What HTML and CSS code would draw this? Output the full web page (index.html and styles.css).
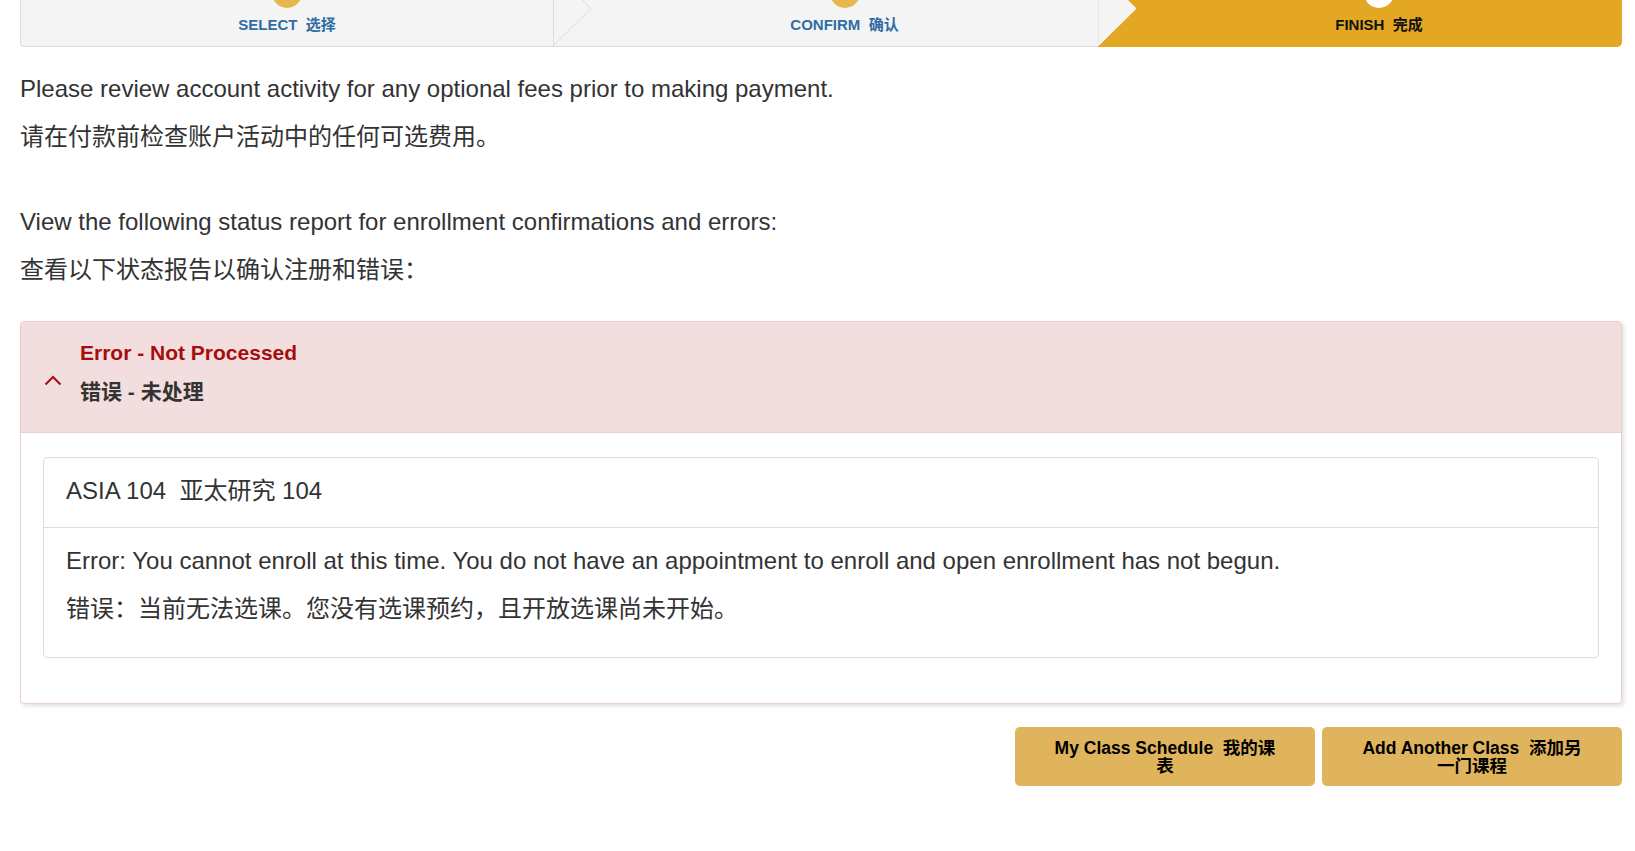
FILE: index.html
```html
<!DOCTYPE html>
<html lang="zh-CN">

<head>
    <meta charset="UTF-8">
    <meta name="viewport" content="width=device-width, initial-scale=1.0">
    <title>Enrollment Status</title>
    <link rel="stylesheet" href="styles.css">
</head>

<body>
    <div class="page">
        <!-- steps: select / confirm / finish -->
        <div class="stepper">
            <div class="step step-select">
                <span class="step-dot"></span>
                <span class="step-label">SELECT&nbsp; 选择</span>
                <svg class="step-arrow" viewBox="0 0 38 75" preserveAspectRatio="none">
                    <polygon points="0,0 38,37.5 0,75" fill="#f4f4f4" />
                    <polyline points="0,0 38,37.5 0,75" fill="none" stroke="#dcdcdc" stroke-width="1" />
                    <line x1="0.5" y1="0" x2="0.5" y2="75" stroke="#dcdcdc" stroke-width="1" />
                </svg>
            </div>
            <div class="step step-confirm">
                <span class="step-dot"></span>
                <span class="step-label">CONFIRM&nbsp; 确认</span>
                <svg class="step-arrow" viewBox="0 0 38 75" preserveAspectRatio="none">
                    <polygon points="0,0 38,37.5 0,75" fill="#f4f4f4" />
                    <polyline points="0,0 38,37.5 0,75" fill="none" stroke="#ffffff" stroke-width="1" />
                    <line x1="0.5" y1="0" x2="0.5" y2="75" stroke="#e4e4e4" stroke-width="1" />
                </svg>
            </div>
            <div class="step step-finish">
                <span class="step-dot"></span>
                <span class="step-label">FINISH&nbsp; 完成</span>
            </div>
        </div>

        <div class="intro">
            <p>Please review account activity for any optional fees prior to making payment.<br>请在付款前检查账户活动中的任何可选费用。</p>
            <p>View the following status report for enrollment confirmations and errors:<br>查看以下状态报告以确认注册和错误：</p>
        </div>

        <div class="status-card">
            <div class="status-head">
                <svg class="status-icon" width="18" height="11" viewBox="0 0 18 11">
                    <polyline points="1.5,9.5 9,2 16.5,9.5" fill="none" stroke="#a40e0e" stroke-width="2" />
                </svg>
                <div>
                    <div class="status-title">Error - Not Processed</div>
                    <div class="status-sub">错误 - 未处理</div>
                </div>
            </div>
            <div class="status-body">
                <div class="class-card">
                    <div class="class-head">ASIA 104&nbsp; 亚太研究 104</div>
                    <div class="class-body">
                        Error: You cannot enroll at this time. You do not have an appointment to enroll and open enrollment has not begun.<br>
                        错误：当前无法选课。您没有选课预约，且开放选课尚未开始。
                    </div>
                </div>
            </div>
        </div>

        <div class="actions">
            <button class="btn">My Class Schedule&nbsp; 我的课表</button>
            <button class="btn">Add Another Class&nbsp; 添加另一门课程</button>
        </div>
    </div>
</body>

</html>
```

FILE: styles.css
```css
body {
    margin: 0;
    font-family: "Liberation Sans", Arial, "Noto Sans CJK SC", sans-serif;
    color: #333;
    background-color: #fff;
}

.page {
    width: 1602px;
    margin-left: 20px;
}

/* stepper */
.stepper {
    display: flex;
    height: 76px;
    margin-top: -29px;
}

.step {
    position: relative;
    display: flex;
    flex-direction: column;
    align-items: center;
    box-sizing: border-box;
    padding-top: 7px;
    background-color: #f4f4f4;
    border-bottom: 1px solid #dcdcdc;
}

.step-select {
    width: 533px;
    border-left: 1px solid #dcdcdc;
    border-bottom-left-radius: 4px;
}

.step-confirm {
    width: 545px;
    padding-left: 38px;
}

.step-finish {
    width: 524px;
    padding-left: 38px;
    background-color: #e3a723;
    border-bottom: none;
    border-bottom-right-radius: 5px;
}

.step-dot {
    width: 30px;
    height: 30px;
    border-radius: 50%;
    background-color: #e9b64e;
}

.step-finish .step-dot {
    background-color: #fff;
}

.step-label {
    margin-top: 8px;
    font-size: 15px;
    line-height: 18px;
    font-weight: bold;
    color: #2e6da4;
}

.step-finish .step-label {
    color: #111;
}

.step-arrow {
    position: absolute;
    top: 0;
    left: 100%;
    width: 38px;
    height: 75px;
    z-index: 1;
}

/* intro text */
.intro {
    margin: 18px 0 27px;
}

.intro p {
    margin: 0 0 37px;
    font-size: 24px;
    line-height: 48px;
}

.intro p:last-child {
    margin-bottom: 0;
}

/* status report */
.status-card {
    border: 1px solid #ebccd1;
    border-radius: 4px;
    background-color: #fff;
    box-shadow: 2px 2px 4px rgba(0, 0, 0, 0.12);
}

.status-head {
    display: flex;
    align-items: flex-start;
    gap: 18px;
    padding: 11px 24px 21px 23px;
    background-color: #f2dede;
    border-bottom: 1px solid #ebccd1;
    border-radius: 3px 3px 0 0;
}

.status-icon {
    margin-top: 42px;
    flex-shrink: 0;
}

.status-title,
.status-sub {
    font-size: 21px;
    line-height: 39px;
    font-weight: bold;
}

.status-title {
    color: #a40e0e;
}

.status-sub {
    color: #333;
}

.status-body {
    padding: 24px 22px 45px;
}

.class-card {
    border: 1px solid #ddd;
    border-radius: 4px;
}

.class-head {
    padding: 10px 22px 12px;
    font-size: 24px;
    line-height: 46.7px;
    border-bottom: 1px solid #ddd;
}

.class-body {
    padding: 9px 22px 24px;
    font-size: 24px;
    line-height: 48px;
}

/* buttons */
.actions {
    display: flex;
    justify-content: flex-end;
    gap: 7px;
    margin-top: 23px;
}

.btn {
    width: 300px;
    box-sizing: border-box;
    padding: 12px 35px 11px;
    border: none;
    border-radius: 5px;
    background-color: #dfb45d;
    color: #000;
    font-family: "Liberation Sans", Arial, "Noto Sans CJK SC", sans-serif;
    font-size: 17.5px;
    line-height: 18px;
    font-weight: bold;
    cursor: pointer;
}

.btn:hover {
    background-color: #d9aa4c;
}
```
